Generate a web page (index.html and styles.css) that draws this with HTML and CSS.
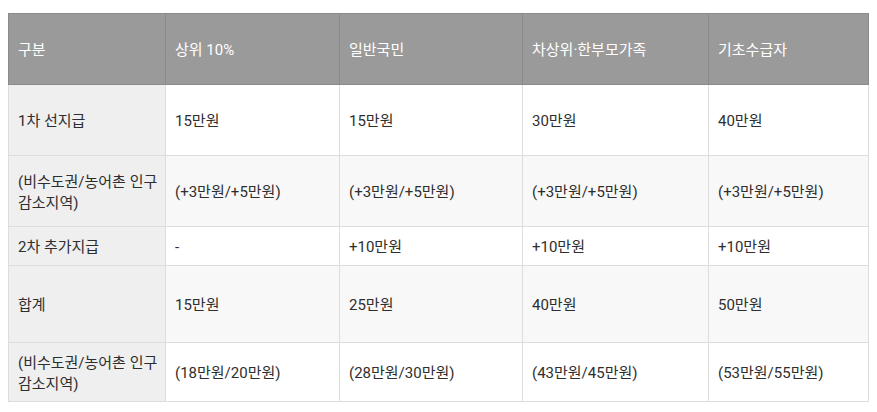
FILE: index.html
```html
<!DOCTYPE html>
<html lang="ko">
<head>
<meta charset="utf-8">
<link rel="stylesheet" href="styles.css">
</head>
<body>
<div class="wrap">
<table class="grid">
  <colgroup>
    <col class="c1"><col class="c2"><col class="c3"><col class="c4"><col class="c5">
  </colgroup>
  <thead>
    <tr class="h-head">
      <th>구분</th><th>상위 10%</th><th>일반국민</th><th>차상위·한부모가족</th><th>기초수급자</th>
    </tr>
  </thead>
  <tbody>
    <tr class="h-71">
      <td class="lead">1차 선지급</td><td>15만원</td><td>15만원</td><td>30만원</td><td>40만원</td>
    </tr>
    <tr class="h-71 alt">
      <td class="lead">(비수도권/농어촌 인구<br>감소지역)</td><td>(+3만원/+5만원)</td><td>(+3만원/+5만원)</td><td>(+3만원/+5만원)</td><td>(+3만원/+5만원)</td>
    </tr>
    <tr class="h-39">
      <td class="lead">2차 추가지급</td><td>-</td><td>+10만원</td><td>+10만원</td><td>+10만원</td>
    </tr>
    <tr class="h-77 alt">
      <td class="lead">합계</td><td>15만원</td><td>25만원</td><td>40만원</td><td>50만원</td>
    </tr>
    <tr class="h-59">
      <td class="lead">(비수도권/농어촌 인구<br>감소지역)</td><td>(18만원/20만원)</td><td>(28만원/30만원)</td><td>(43만원/45만원)</td><td>(53만원/55만원)</td>
    </tr>
  </tbody>
</table>
</div>
</body>
</html>
```

FILE: styles.css
```css
html, body {
  margin: 0;
  padding: 0;
  background: #fff;
}
body {
  padding: 13px 8px 0 8px;
  font-family: Roboto, "Noto Sans CJK KR", sans-serif;
  font-size: 15px;
  color: #2e2e2e;
}
.grid {
  border-collapse: collapse;
  table-layout: fixed;
  width: 860px;
}
.c1 { width: 157px; }
.c2 { width: 174px; }
.c3 { width: 183px; }
.c4 { width: 186px; }
.c5 { width: 160px; }
.grid th,
.grid td {
  text-align: left;
  vertical-align: middle;
  padding: 3px 9px 0 9px;
  line-height: 21px;
  font-weight: normal;
  white-space: nowrap;
  overflow: visible;
}
.grid th {
  background: #9a9a9a;
  color: #fff;
  border: 1px solid #8a8a8a;
}
.grid td {
  border: 1px solid #dddddd;
  background: #fff;
}
.grid tr.alt td {
  background: #f8f8f8;
}
.grid td.lead,
.grid tr.alt td.lead {
  background: #efefef;
}
.h-head { height: 71px; }
.h-71 { height: 71px; }
.h-39 { height: 39px; }
.h-77 { height: 77px; }
.h-59 { height: 59px; }
```
